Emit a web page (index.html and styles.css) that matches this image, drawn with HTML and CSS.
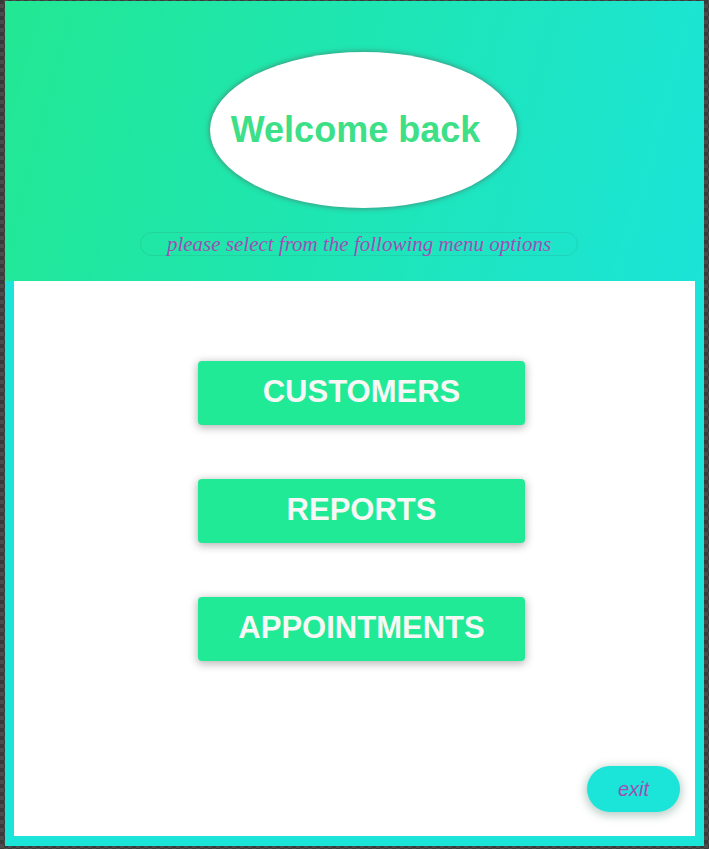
FILE: index.html
```html
<!DOCTYPE html>
<html lang="en">
<head>
<meta charset="utf-8">
<title>Menu</title>
<link rel="stylesheet" href="styles.css">
</head>
<body>
<div class="app">
  <header class="header">
    <div class="welcome"><h1 class="welcome-title">Welcome back</h1></div>
    <p class="subtitle">please select from the following menu options</p>
  </header>
  <main class="panel">
    <nav class="menu">
      <button class="menu-btn">CUSTOMERS</button>
      <button class="menu-btn">REPORTS</button>
      <button class="menu-btn">APPOINTMENTS</button>
    </nav>
    <button class="exit-btn">exit</button>
  </main>
</div>
</body>
</html>
```

FILE: styles.css
```css
html, body {
  margin: 0;
  padding: 0;
  height: 100%;
}
body {
  background-color: #3d3d3d;
  background-image: repeating-conic-gradient(#4b4b4b 0 25%, #3a3a3a 0 50%);
  background-size: 8px 8px;
  font-family: "Liberation Sans", Arial, sans-serif;
}
.app {
  margin: 1px 5px 0 5px;
  width: 699px;
  height: 845px;
  display: flex;
  flex-direction: column;
}
.header {
  height: 280px;
  box-sizing: border-box;
  padding-top: 51px;
  background: linear-gradient(105deg, #22e893 0%, #1ee6b4 50%, #1be4d8 100%);
  display: flex;
  flex-direction: column;
  align-items: center;
}
.welcome {
  width: 307px;
  height: 156px;
  border-radius: 50%;
  background: #ffffff;
  box-shadow: 0 0 5px 1px rgba(90, 90, 90, 0.55);
  display: flex;
  align-items: center;
  justify-content: center;
  margin-left: 18px;
}
.welcome-title {
  margin: 0 16px 0 0;
  font-size: 36px;
  font-weight: bold;
  color: #3ddf87;
}
.subtitle {
  margin: 24px 0 0 9px;
  height: 24px;
  box-sizing: border-box;
  padding: 0 26px;
  border: 1px solid rgba(60, 120, 110, 0.18);
  border-radius: 12px;
  font-family: "Liberation Serif", "Times New Roman", serif;
  font-style: italic;
  font-size: 21px;
  line-height: 23px;
  color: #a34db5;
}
.panel {
  flex: 1;
  background: #ffffff;
  border: 9px solid #1be4d8;
  border-top: 0;
  border-bottom-width: 10px;
  display: flex;
  flex-direction: column;
}
.menu {
  padding-top: 80px;
  display: flex;
  flex-direction: column;
  align-items: center;
  gap: 54px;
}
.menu-btn {
  width: 327px;
  height: 64px;
  border: 0;
  border-radius: 4px;
  background: #20ea96;
  color: #f7f7f5;
  font-family: "Liberation Sans", Arial, sans-serif;
  font-weight: bold;
  font-size: 31px;
  line-height: 62px;
  box-shadow: 0 2px 8px 1px rgba(0, 0, 0, 0.28);
  padding: 0 0 2px 0;
  margin-left: 14px;
}
.exit-btn {
  margin-top: auto;
  align-self: flex-end;
  margin-right: 15px;
  margin-bottom: 24px;
  width: 93px;
  height: 46px;
  border: 0;
  border-radius: 23px;
  background: #1be4d8;
  color: #a34db5;
  font-family: "Liberation Sans", Arial, sans-serif;
  font-style: italic;
  font-size: 20px;
  box-shadow: 0 2px 8px 2px rgba(60, 120, 100, 0.35);
  padding: 0;
}
```
